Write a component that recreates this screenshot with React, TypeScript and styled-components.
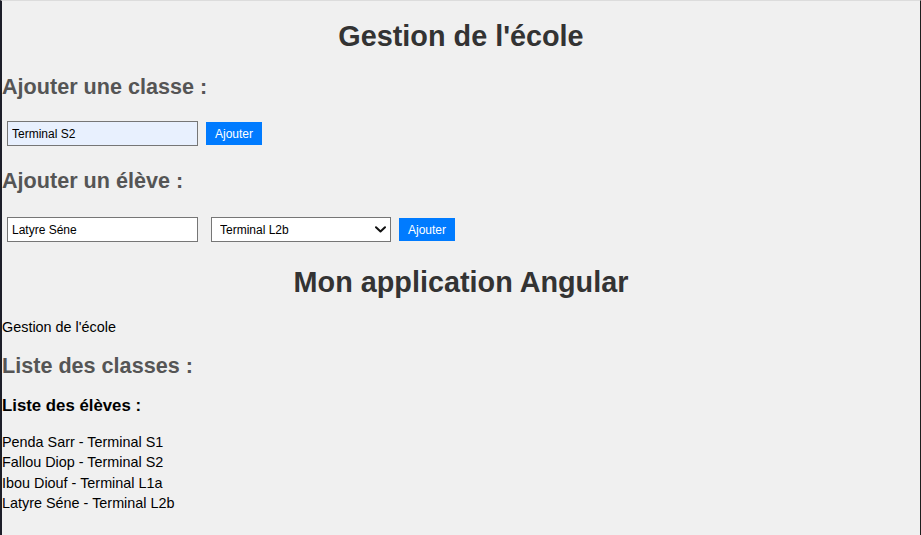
import React from "react";
import styled, { createGlobalStyle } from "styled-components";

const GlobalStyle = createGlobalStyle`
  html, body {
    margin: 0;
    padding: 0;
    background: #f0f0f0;
    overflow: hidden;
  }
  body {
    font-family: "Liberation Sans", Arial, sans-serif;
  }
  * { box-sizing: border-box; }
`;

const Frame = styled.div`
  width: 921px;
  min-height: 535px;
  background: #f0f0f0;
  border-left: 2px solid #1c1e29;
  border-right: 1px solid #1e1e1e;
  border-top: 1px solid #dcdcdc;
  display: flex;
  flex-direction: column;
  align-items: stretch;
  font-family: "Liberation Sans", Arial, sans-serif;
  color: #000;
`;

const Title = styled.h1<{ $top: number }>`
  margin: ${(p) => p.$top}px 0 0;
  font-size: 28.8px;
  line-height: 33px;
  font-weight: bold;
  color: #333;
  text-align: center;
`;

const SectionTitle = styled.h2<{ $top: number }>`
  margin: ${(p) => p.$top}px 0 0;
  font-size: 21.6px;
  line-height: 25px;
  font-weight: bold;
  color: #555;
`;

const SubTitle = styled.h3<{ $top: number }>`
  margin: ${(p) => p.$top}px 0 0;
  font-size: 16.8px;
  line-height: 19px;
  font-weight: bold;
  color: #000;
`;

const Paragraph = styled.p<{ $top: number }>`
  margin: ${(p) => p.$top}px 0 0;
  font-size: 14.4px;
  line-height: 16px;
  color: #000;
`;

const FormRow = styled.form<{ $top: number }>`
  margin: ${(p) => p.$top}px 0 0;
  padding-left: 5px;
  display: flex;
  align-items: center;
`;

const TextInput = styled.input<{ $autofill?: boolean }>`
  width: 191px;
  height: 25px;
  padding: 0 4px;
  border: 1px solid #767676;
  border-radius: 0;
  background: ${(p) => (p.$autofill ? "#e8f0fe" : "#ffffff")};
  font-family: "Liberation Sans", Arial, sans-serif;
  font-size: 12px;
  color: #000;
  outline: none;
`;

const SelectWrap = styled.div`
  position: relative;
  margin-left: 13px;
  width: 180px;
  height: 25px;
`;

const Select = styled.select`
  appearance: none;
  -webkit-appearance: none;
  width: 100%;
  height: 100%;
  padding: 0 24px 0 8px;
  border: 1px solid #767676;
  border-radius: 0;
  background: #ffffff;
  font-family: "Liberation Sans", Arial, sans-serif;
  font-size: 12px;
  color: #000;
  outline: none;
`;

const Chevron = styled.svg`
  position: absolute;
  right: 5px;
  top: 9px;
  width: 11px;
  height: 7px;
  pointer-events: none;
`;

const AddButton = styled.button`
  margin-left: 8px;
  width: 56px;
  height: 23px;
  padding: 0;
  border: none;
  border-radius: 0;
  background: #007bff;
  color: #ffffff;
  font-family: "Liberation Sans", Arial, sans-serif;
  font-size: 12px;
  cursor: pointer;
`;

const StudentList = styled.div<{ $top: number }>`
  margin: ${(p) => p.$top}px 0 0;
  display: flex;
  flex-direction: column;
`;

const StudentItem = styled.div`
  font-size: 14.4px;
  line-height: 20.3px;
  color: #000;
`;

const students = [
  { name: "Penda Sarr", classe: "Terminal S1" },
  { name: "Fallou Diop", classe: "Terminal S2" },
  { name: "Ibou Diouf", classe: "Terminal L1a" },
  { name: "Latyre Séne", classe: "Terminal L2b" },
];

const classes = ["Terminal S1", "Terminal S2", "Terminal L1a", "Terminal L2b"];

export default function App() {
  return (
    <>
      <GlobalStyle />
      <Frame>
        <Title $top={19}>Gestion de l'école</Title>
        <SectionTitle $top={21}>Ajouter une classe :</SectionTitle>
        <FormRow $top={22} onSubmit={(e) => e.preventDefault()}>
          <TextInput $autofill defaultValue="Terminal S2" />
          <AddButton type="submit">Ajouter</AddButton>
        </FormRow>
        <SectionTitle $top={22}>Ajouter un élève :</SectionTitle>
        <FormRow $top={24} onSubmit={(e) => e.preventDefault()}>
          <TextInput defaultValue="Latyre Séne" />
          <SelectWrap>
            <Select defaultValue="Terminal L2b">
              {classes.map((c) => (
                <option key={c} value={c}>
                  {c}
                </option>
              ))}
            </Select>
            <Chevron viewBox="0 0 11 7" fill="none">
              <path d="M1 1.2 L5.5 5.5 L10 1.2" stroke="#111" strokeWidth="2" strokeLinecap="round" strokeLinejoin="round" />
            </Chevron>
          </SelectWrap>
          <AddButton type="submit">Ajouter</AddButton>
        </FormRow>
        <Title $top={24}>Mon application Angular</Title>
        <Paragraph $top={20}>Gestion de l'école</Paragraph>
        <SectionTitle $top={18}>Liste des classes :</SectionTitle>
        <SubTitle $top={18}>Liste des élèves :</SubTitle>
        <StudentList $top={17}>
          {students.map((s) => (
            <StudentItem key={s.name}>
              {s.name} - {s.classe}
            </StudentItem>
          ))}
        </StudentList>
      </Frame>
    </>
  );
}
